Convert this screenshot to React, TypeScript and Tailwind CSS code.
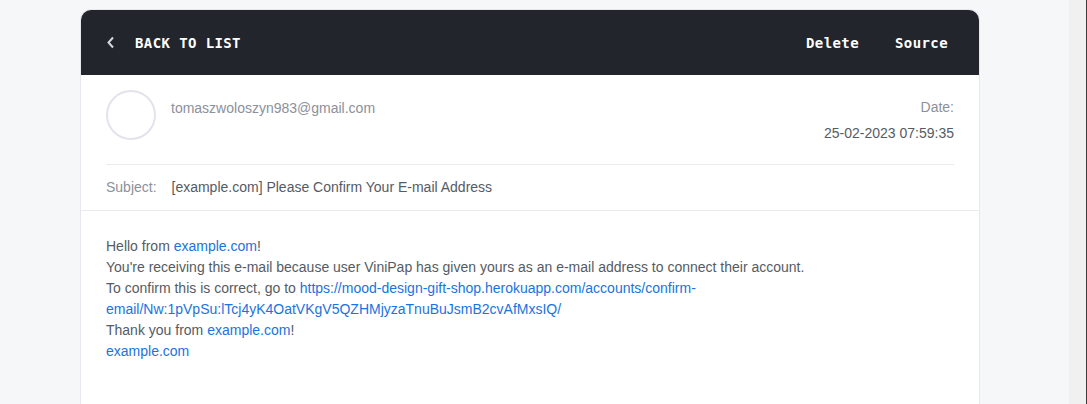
export default function App() {
  const link = "text-[#1a73e0]";
  return (
    <div className="flex h-[404px] w-[1087px] overflow-hidden bg-[#f5f7f9] font-['Liberation_Sans',sans-serif] text-[14px] text-[#555b63]">
      <div className="flex flex-1 pl-20">
        <main className="mt-[9px] w-[900px] rounded-t-[11px] border border-b-0 border-[#e6e8ee] bg-white">
          <header className="flex h-[65px] items-center justify-between rounded-t-[10px] bg-[#22252c] pr-[31px] pl-[25px] font-['DejaVu_Sans_Mono',monospace] text-[14px] leading-5 font-bold tracking-[0.4px] text-white">
            <button className="flex items-center">
              <svg width="10" height="14" viewBox="0 0 10 14" fill="none" stroke="#d4d7dd" strokeWidth="2"><path d="M7 1.500 2.500 6.500 7 11.500" /></svg>
              <span className="ml-[19px]">BACK TO LIST</span>
            </button>
            <nav className="flex gap-9"><button>Delete</button><button>Source</button></nav>
          </header>
          <section className="mx-[25px] flex h-[90px] justify-between border-b border-[#e9ebef]">
            <div className="flex pt-[15px]">
              <div className="size-[50px] rounded-full border-2 border-[#e3e3ec]" />
              <span className="mt-2 ml-[15px] leading-5 text-[#8c909b]">tomaszwoloszyn983@gmail.com</span>
            </div>
            <div className="pt-[19px] text-right leading-[26px]"><p className="text-[#8c909b]">Date:</p><p>25-02-2023 07:59:35</p></div>
          </section>
          <section className="flex h-[46px] items-center border-b border-[#e9ebef] px-[25px]">
            <span className="w-[65.5px] text-[#8c909b]">Subject:</span><span>[example.com] Please Confirm Your E-mail Address</span>
          </section>
          <article className="px-[25px] pt-[25px] leading-[21px]">
            <p>Hello from <a className={link}>example.com</a>!</p>
            <p>You're receiving this e-mail because user ViniPap has given yours as an e-mail address to connect their account.</p>
            <p>To confirm this is correct, go to <a className={link}>https://mood-design-gift-shop.herokuapp.com/accounts/confirm-<br />email/Nw:1pVpSu:lTcj4yK4OatVKgV5QZHMjyzaTnuBuJsmB2cvAfMxsIQ/</a></p>
            <p>Thank you from <a className={link}>example.com</a>!</p>
            <p><a className={link}>example.com</a></p>
          </article>
        </main>
      </div>
      <div className="w-[18px] border-r border-[#3c3c3c] bg-[#f0f0f0]" />
    </div>
  );
}
